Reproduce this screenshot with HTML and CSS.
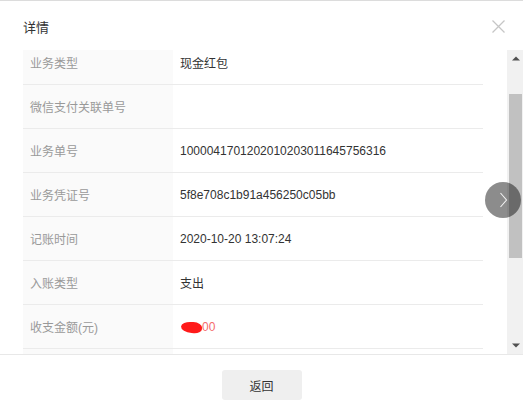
FILE: index.html
```html
<!DOCTYPE html>
<html lang="zh">
<head>
<meta charset="utf-8">
<title>详情</title>
<link rel="stylesheet" href="styles.css">
</head>
<body>
<div class="dialog">
  <div class="header">
    <span class="title">详情</span>
    <svg class="close" width="13" height="13" viewBox="0 0 13 13"><path d="M0.5 0.5 L12.5 12.5 M12.5 0.5 L0.5 12.5" stroke="#c6c6c6" stroke-width="1.3" fill="none"/></svg>
  </div>
  <div class="body">
    <div class="scroll" id="scroll">
      <div class="table">
        <div class="row"><div class="label">业务类型</div><div class="value">现金红包</div></div>
        <div class="row"><div class="label">微信支付关联单号</div><div class="value"></div></div>
        <div class="row"><div class="label">业务单号</div><div class="value">1000041701202010203011645756316</div></div>
        <div class="row"><div class="label">业务凭证号</div><div class="value">5f8e708c1b91a456250c05bb</div></div>
        <div class="row"><div class="label">记账时间</div><div class="value">2020-10-20 13:07:24</div></div>
        <div class="row"><div class="label">入账类型</div><div class="value">支出</div></div>
        <div class="row"><div class="label">收支金额(元)</div><div class="value amount"><span class="redact"></span>00</div></div>
        <div class="row"><div class="label"></div><div class="value"></div></div>
      </div>
    </div>
    <div class="vbar">
      <div class="vbar-btn">
        <svg width="8" height="5" viewBox="0 0 8 5"><path d="M0 4.5 L4 0.5 L8 4.5 Z" fill="#505050"/></svg>
      </div>
      <div class="vbar-track"><div class="vbar-thumb"></div></div>
      <div class="vbar-btn">
        <svg width="8" height="5" viewBox="0 0 8 5"><path d="M0 0.5 L8 0.5 L4 4.5 Z" fill="#505050"/></svg>
      </div>
    </div>
  </div>
  <div class="footer">
    <button class="btn">返回</button>
  </div>
  <div class="next">
    <svg width="36" height="36" viewBox="0 0 36 36"><path d="M15.5 11 L21.5 18 L15.5 25" stroke="#f2f2f2" stroke-width="1.1" fill="none"/></svg>
  </div>
</div>
<script src="script.js"></script>
</body>
</html>
```

FILE: styles.css
```css
html, body {
  margin: 0;
  padding: 0;
  background: #fff;
}
body {
  font-family: "Liberation Sans", "Noto Sans CJK SC", sans-serif;
  font-size: 12px;
  color: #333;
}
.dialog {
  position: relative;
  width: 523px;
  height: 412px;
  border-top: 1px solid #dcdcdc;
  box-sizing: border-box;
}
.header {
  height: 49px;
  display: flex;
  align-items: center;
  justify-content: space-between;
  padding: 0 18px 0 23px;
}
.title {
  font-size: 13px;
  color: #333;
  margin-top: 1px;
}
.close {
  display: block;
  margin-top: 2px;
}
.body {
  display: flex;
  height: 304px;
  margin-left: 23px;
}
.scroll {
  flex: 1;
  overflow: hidden;
  padding-right: 24px;
}
.vbar {
  width: 16px;
  background: #f1f1f1;
  display: flex;
  flex-direction: column;
}
.vbar-btn {
  height: 17px;
  display: flex;
  align-items: center;
  justify-content: center;
  padding-left: 1px;
}
.vbar-btn svg {
  display: block;
}
.vbar-track {
  flex: 1;
  padding: 27px 1px 0 2px;
}
.vbar-thumb {
  height: 164px;
  background: #c1c1c1;
}
.table {
  width: 460px;
  padding-top: 44px;
}
.row {
  display: flex;
  height: 44px;
  border-bottom: 1px solid #ebebeb;
  box-sizing: border-box;
}
.label {
  width: 150px;
  background: #fafafa;
  color: #999;
  padding-left: 7px;
  box-sizing: border-box;
  display: flex;
  align-items: center;
}
.value {
  flex: 1;
  padding-left: 7px;
  display: flex;
  align-items: center;
  color: #333;
}
.amount {
  color: #f56c6c;
}
.redact {
  display: inline-block;
  width: 21px;
  height: 11px;
  background: #ff1a1a;
  border-radius: 50% 45% 40% 55%;
  margin-left: 1px;
  margin-top: 2px;
  transform: rotate(4deg);
}
.footer {
  border-top: 1px solid #e8e8e8;
  display: flex;
  justify-content: center;
  padding-top: 15px;
}
.btn {
  width: 80px;
  height: 30px;
  border: 0;
  border-radius: 3px;
  background: #efefef;
  font-family: "Liberation Sans", "Noto Sans CJK SC", sans-serif;
  font-size: 12px;
  color: #333;
  padding: 0;
}
.next {
  position: absolute;
  left: 485px;
  top: 181px;
  width: 36px;
  height: 36px;
  border-radius: 50%;
  background: rgba(0, 0, 0, 0.45);
}
.next svg {
  display: block;
}
```

FILE: script.js
```js
document.getElementById('scroll').scrollTop = 53;
```
